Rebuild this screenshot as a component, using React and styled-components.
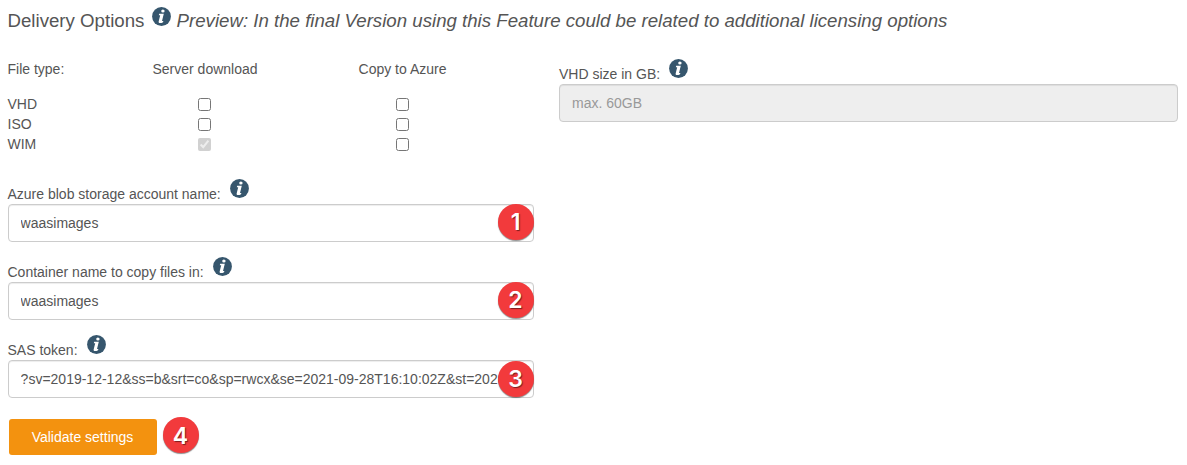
import React from "react";
import styled, { createGlobalStyle } from "styled-components";

const GlobalStyle = createGlobalStyle`
  * { box-sizing: border-box; }
  body {
    margin: 0;
    background: #fff;
    color: #555;
    font: 14px/20px "Liberation Sans", Arial, sans-serif;
    overflow: hidden;
  }
`;

const Page = styled.main`
  width: 1187px;
  height: 465px;
  padding: 7px 9px 0 7.5px;
`;

const Title = styled.h1`
  display: flex;
  align-items: flex-start;
  margin: 0;
  height: 52px;
  font-size: 18.67px;
  font-weight: 400;
  line-height: 27px;
  white-space: pre;
`;

const Preview = styled.em`
  margin-left: 5.5px;
`;

const Info = styled.svg`
  display: block;
  flex: none;
  width: 19px;
  height: 19px;
`;

const TitleText = styled.span`
  margin-right: 2.5px;
`;

const Columns = styled.div`
  display: grid;
  grid-template-columns: 526.5px 619px;
  column-gap: 25px;
`;

const FileTypes = styled.div`
  display: grid;
  grid-template-columns: 99px 197px 198px;
  grid-template-rows: 35px repeat(3, 20px);
  height: 119px;
`;

const Cell = styled.div`
  display: flex;
  justify-content: ${(p) => (p.$center ? "center" : "flex-start")};
  white-space: nowrap;
`;

const Check = styled.input`
  width: 13px;
  height: 13px;
  margin: 4px 0.8px 0 0;
`;

const Field = styled.div`
  height: 78px;
`;

const Label = styled.label`
  display: flex;
  align-items: flex-start;
  height: ${(p) => (p.$compact ? 25 : 26)}px;
  gap: ${(p) => (p.$compact ? 8.5 : 9)}px;
  line-height: 20px;
  white-space: nowrap;

  ${Info} {
    margin-top: ${(p) => (p.$compact ? 0 : 1)}px;
  }
`;

const LabelText = styled.span`
  padding-top: ${(p) => (p.$compact ? 5 : 6)}px;
`;

const InputWrap = styled.div`
  position: relative;
  margin-left: 0.5px;
`;

const Input = styled.input`
  display: block;
  width: 100%;
  height: 38px;
  padding: 6px 12px 6px ${(p) => (p.disabled ? 12 : 11.6)}px;
  border: 1px solid #ccc;
  border-radius: 4px;
  background: ${(p) => (p.disabled ? "#eee" : "#fff")};
  box-shadow: inset 0 1px 1px rgba(0, 0, 0, 0.075);
  color: #555;
  font: inherit;
  &::placeholder { color: #999; opacity: 1; }
`;

const Badge = styled.span`
  display: flex;
  align-items: center;
  justify-content: center;
  width: 36px;
  height: 36px;
  border-radius: 50%;
  background: #f23a3c;
  box-shadow: 0 1px 1px rgba(0, 0, 0, 0.45);
  color: #fff;
  font: 600 23px/36px Inter, sans-serif;
  text-shadow: 1px 1px 1px rgba(0, 0, 0, 0.5);
`;

const InputBadge = styled(Badge)`
  position: absolute;
  right: 0.5px;
  top: ${(p) => p.$top || 0}px;
`;

const ActionBadge = styled(Badge)`
  padding-top: 2px;
`;

const Actions = styled.div`
  display: flex;
  align-items: flex-start;
  gap: 5.5px;
  padding: 5px 0 0 1.5px;
`;

const Button = styled.button`
  width: 148px;
  height: 36px;
  margin-top: 2px;
  padding: 0 1px 0 0;
  border: 0;
  border-radius: 3px;
  background: #f3920f;
  color: #fff;
  font: inherit;
`;

function InfoIcon() {
  return (
    <Info viewBox="0 0 19 19" aria-label="Info">
      <circle cx="9.5" cy="9.5" r="9.4" fill="#36566d" />
      <g fill="#fff">
        <ellipse cx="10.9" cy="4.1" rx="1.7" ry="1.5" />
        <path d="M7.2 6.7h4.6L10 13.9h1.4l-.4 1.3c-.9.6-2 .9-2.8.9-1.3 0-1.8-.7-1.5-1.9l1.5-6H6.8z" />
      </g>
    </Info>
  );
}

const fields = [
  { label: "Azure blob storage account name:", value: "waasimages", top: 0 },
  { label: "Container name to copy files in:", value: "waasimages", top: 0 },
  {
    label: "SAS token:",
    value: "?sv=2019-12-12&ss=b&srt=co&sp=rwcx&se=2021-09-28T16:10:02Z&st=2020-09-28T08:10:02Z",
    top: 1,
  },
];

const types = ["VHD", "ISO", "WIM"];

export default function App() {
  return (
    <>
      <GlobalStyle />
      <Page>
        <Title>
          <TitleText>Delivery Options </TitleText>
          <InfoIcon />
          <Preview>
            Preview: In the final Version using this Feature could be related to additional licensing options
          </Preview>
        </Title>
        <Columns>
          <div>
            <FileTypes>
              <Cell>File type:</Cell>
              <Cell $center>Server download</Cell>
              <Cell $center>Copy to Azure</Cell>
              {types.map((t) => (
                <React.Fragment key={t}>
                  <Cell>{t}</Cell>
                  <Cell $center>
                    <Check type="checkbox" defaultChecked={t === "WIM"} disabled={t === "WIM"} />
                  </Cell>
                  <Cell $center>
                    <Check type="checkbox" />
                  </Cell>
                </React.Fragment>
              ))}
            </FileTypes>
            {fields.map((f, i) => (
              <Field key={f.label}>
                <Label>
                  <LabelText>{f.label}</LabelText>
                  <InfoIcon />
                </Label>
                <InputWrap>
                  <Input defaultValue={f.value} />
                  <InputBadge $top={f.top}>{i + 1}</InputBadge>
                </InputWrap>
              </Field>
            ))}
            <Actions>
              <Button>Validate settings</Button>
              <ActionBadge>4</ActionBadge>
            </Actions>
          </div>
          <Field>
            <Label $compact>
              <LabelText $compact>VHD size in GB:</LabelText>
              <InfoIcon />
            </Label>
            <Input placeholder="max. 60GB" disabled />
          </Field>
        </Columns>
      </Page>
    </>
  );
}
